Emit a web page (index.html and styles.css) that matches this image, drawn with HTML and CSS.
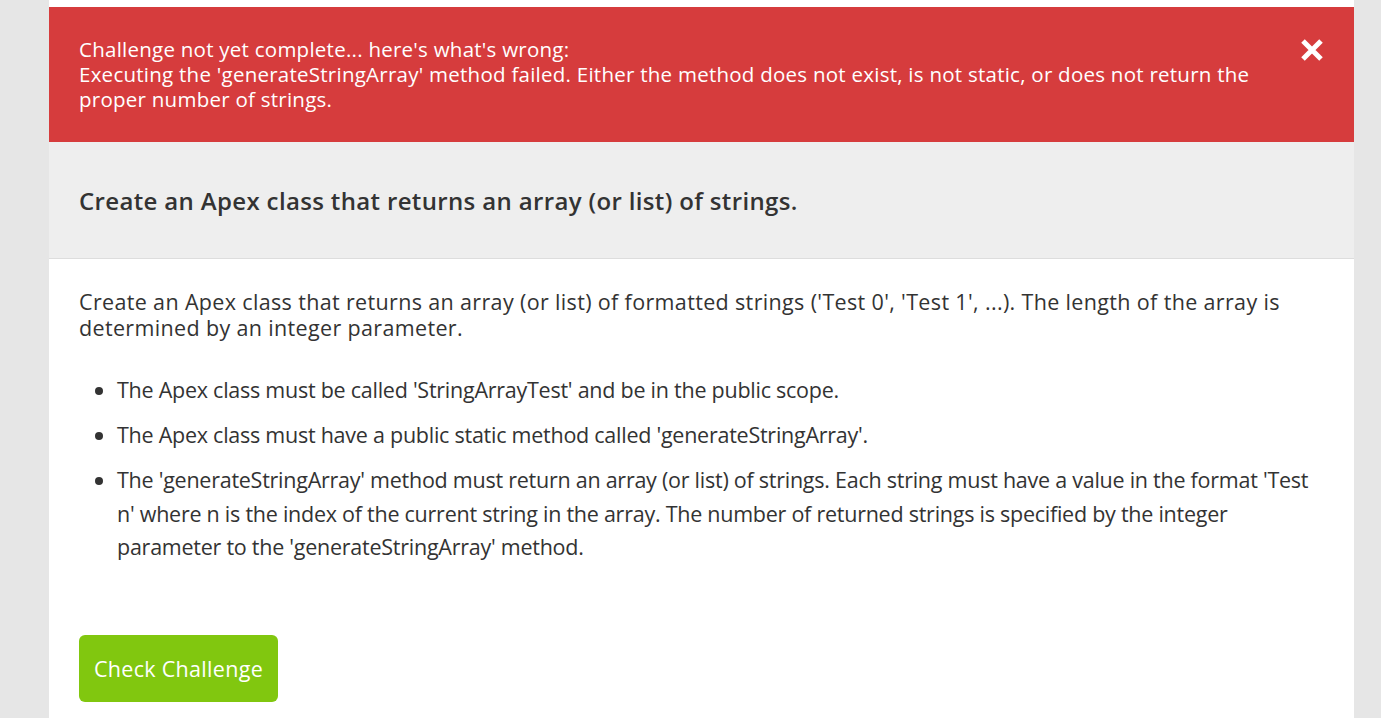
FILE: index.html
```html
<!DOCTYPE html>
<html>
<head>
<meta charset="utf-8">
<link rel="stylesheet" href="styles.css">
</head>
<body>
<div class="card">
  <div class="alert">
    <div class="alert-text">
      <div>Challenge not yet complete... here's what's wrong:</div>
      <div>Executing the 'generateStringArray' method failed. Either the method does not exist, is not static, or does not return the proper number of strings.</div>
    </div>
    <button class="close" aria-label="Close">
      <svg width="24" height="24" viewBox="0 0 24 24"><path d="M3 3 L21 21 M21 3 L3 21" stroke="#fff" stroke-width="5" stroke-linecap="butt"/></svg>
    </button>
  </div>
  <div class="head">
    <h2>Create an Apex class that returns an array (or list) of strings.</h2>
  </div>
  <div class="body">
    <p>Create an Apex class that returns an array (or list) of formatted strings ('Test 0', 'Test 1', ...). The length of the array is determined by an integer parameter.</p>
    <ul>
      <li>The Apex class must be called 'StringArrayTest' and be in the public scope.</li>
      <li>The Apex class must have a public static method called 'generateStringArray'.</li>
      <li>The 'generateStringArray' method must return an array (or list) of strings. Each string must have a value in the format 'Test n' where n is the index of the current string in the array. The number of returned strings is specified by the integer parameter to the 'generateStringArray' method.</li>
    </ul>
    <button class="check">Check Challenge</button>
  </div>
</div>
</body>
</html>
```

FILE: styles.css
```css
html, body {
  margin: 0;
  padding: 0;
  background: #e6e6e6;
  font-family: "Open Sans", sans-serif;
  color: #333;
}
.card {
  margin: 0 27px 0 49px;
  background: #fff;
  padding-top: 7px;
  min-height: 711px;
}
.alert {
  background: #d63c3d;
  color: #fff;
  display: flex;
  padding: 30px 30px 30px 30px;
  font-size: 20.5px;
  letter-spacing: 0.25px;
  line-height: 25px;
}
.alert-text {
  flex: 1;
  padding-right: 40px;
}
.close {
  background: none;
  border: 0;
  padding: 0;
  margin: 0;
  width: 24px;
  height: 24px;
  position: relative;
  top: 1px;
  cursor: pointer;
}
.close svg { display: block; }
.head {
  background: #eeeeee;
  border-bottom: 1px solid #dddddd;
  padding: 0 30px;
  height: 116px;
  display: flex;
  align-items: center;
}
.head h2 {
  margin: 0;
  font-size: 24px;
  letter-spacing: 0.35px;
  font-weight: 600;
  color: #333;
}
.body {
  padding: 30px 30px 20px 30px;
  font-size: 21.5px;
  letter-spacing: 0.35px;
}
.body p {
  margin: 0;
  line-height: 26px;
}
.body ul {
  margin: 32px 0 0 0;
  padding-left: 38px;
}
.body li {
  line-height: 33.5px;
  margin-bottom: 11.5px;
  letter-spacing: -0.25px;
}
.check {
  margin-top: 60px;
  background: #81c70f;
  color: #fff;
  border: 0;
  border-radius: 6px;
  font-family: inherit;
  font-size: 21.5px;
  letter-spacing: 0.3px;
  width: 199px;
  height: 67px;
  padding: 0;
}
```
